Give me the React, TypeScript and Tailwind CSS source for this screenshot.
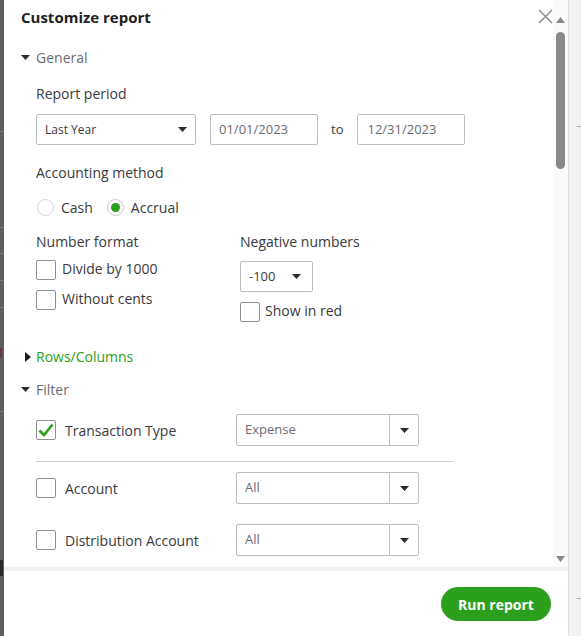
import React from "react";

const TEXT = "text-[#393a3d]";

function DownTri({ className = "" }: { className?: string }) {
  return (
    <svg width="9" height="5" viewBox="0 0 9 5" className={className}>
      <path d="M0 0 L9 0 L4.5 5 Z" fill="#2b2c2f" />
    </svg>
  );
}

function RightTri() {
  return (
    <svg width="6" height="10" viewBox="0 0 6 10">
      <path d="M0 0 L6 5 L0 10 Z" fill="#1a1a1a" />
    </svg>
  );
}

function Checkbox({ checked = false }: { checked?: boolean }) {
  return (
    <div className="w-[20px] h-[20px] border border-[#8d9096] rounded-[2px] bg-white flex items-center justify-center shrink-0">
      {checked && (
        <svg width="16" height="14" viewBox="0 0 16 14">
          <path d="M1.5 7.5 L6 12 L14.5 1.5" fill="none" stroke="#2ca01c" strokeWidth="2.6" />
        </svg>
      )}
    </div>
  );
}

function FilterSelect({ value }: { value: string }) {
  return (
    <div className="ml-auto w-[183px] h-[32px] border border-[#babec5] rounded-[2px] flex items-stretch">
      <div className="flex-1 flex items-center pl-[8px] text-[13px] text-[#6b6c72]">{value}</div>
      <div className="w-[29px] border-l border-[#babec5] flex items-center justify-center">
        <DownTri />
      </div>
    </div>
  );
}

function FilterRow({ label, value, checked }: { label: string; value: string; checked?: boolean }) {
  return (
    <div className="flex items-center w-[383px]">
      <Checkbox checked={checked} />
      <div className={`ml-[9px] text-[14px] ${TEXT}`}>{label}</div>
      <FilterSelect value={value} />
    </div>
  );
}

export default function App() {
  return (
    <div
      className="w-[581px] h-[636px] flex overflow-hidden bg-white"
      style={{ fontFamily: '"Open Sans", "Noto Sans", sans-serif' }}
    >
      {/* left background strip */}
      <div className="w-[4px] h-full bg-[#5e5e5e] flex flex-col shrink-0">
        <div className="h-[131px]" />
        <div className="h-px bg-[#7a7a7a]" />
        <div className="h-[95px]" />
        <div className="h-px bg-[#7a7a7a]" />
        <div className="h-[25px]" />
        <div className="h-px bg-[#7a7a7a]" />
        <div className="h-[26px]" />
        <div className="h-px bg-[#7a7a7a]" />
        <div className="h-[26px]" />
        <div className="h-px bg-[#7a7a7a]" />
        <div className="h-[40px]" />
        <div className="h-[10px] bg-[#6a3a3a] w-[2px]" />
        <div className="h-[53px]" />
        <div className="h-px bg-[#7a7a7a]" />
        <div className="flex-1" />
        <div className="h-[16px] bg-[#2a2a2a] w-[3px]" />
        <div className="h-[60px]" />
      </div>

      {/* panel */}
      <div className="w-[564px] h-full flex flex-col relative shrink-0 bg-white">
        <div className="h-[567px] flex overflow-hidden">
          <div className="flex-1 pl-[17px] flex flex-col">
            <div className="mt-[7px] h-[20px] leading-[20px] text-[15px] font-bold text-[#1f2024]">
              Customize report
            </div>

            {/* General */}
            <div className="mt-[20px] h-[20px] flex items-center">
              <DownTri />
              <span className="ml-[6px] text-[14px] text-[#6b6c72]">General</span>
            </div>

            <div className="pl-[15px] flex flex-col">
              <div className={`mt-[17px] h-[20px] leading-[20px] text-[14px] ${TEXT}`}>Report period</div>
              <div className="mt-[10px] flex items-center h-[31px]">
                <div className="w-[160px] h-[31px] border border-[#babec5] rounded-[2px] flex items-center justify-between pl-[8px] pr-[8px]">
                  <span className={`text-[12px] ${TEXT}`}>Last Year</span>
                  <DownTri />
                </div>
                <div className="ml-[14px] w-[108px] h-[31px] border border-[#babec5] rounded-[2px] flex items-center pl-[8px] text-[13px] text-[#6b6c72]">
                  01/01/2023
                </div>
                <span className={`ml-[13px] text-[13px] ${TEXT}`}>to</span>
                <div className="ml-[14px] w-[108px] h-[31px] border border-[#babec5] rounded-[2px] flex items-center pl-[9px] text-[13px] text-[#6b6c72]">
                  12/31/2023
                </div>
              </div>

              <div className={`mt-[18px] h-[20px] leading-[20px] text-[14px] ${TEXT}`}>Accounting method</div>
              <div className="mt-[14px] h-[20px] flex items-center">
                <div className="ml-[1px] mt-[1px] w-[17px] h-[17px] rounded-full border border-[#d4d7dc] bg-white" />
                <span className={`ml-[7px] text-[14px] ${TEXT}`}>Cash</span>
                <div className="ml-[14px] mt-[1px] w-[17px] h-[17px] rounded-full border border-[#c6c9ce] bg-white flex items-center justify-center">
                  <div className="w-[9px] h-[9px] rounded-full bg-[#2ca01c]" />
                </div>
                <span className={`ml-[7px] text-[14px] ${TEXT}`}>Accrual</span>
              </div>

              <div className="mt-[15px] flex">
                <div className="w-[204px] flex flex-col">
                  <div className={`h-[20px] leading-[20px] text-[14px] ${TEXT}`}>Number format</div>
                  <div className="mt-[8px] flex items-center h-[20px]">
                    <Checkbox />
                    <span className={`ml-[6px] text-[14px] ${TEXT} -mt-[3px]`}>Divide by 1000</span>
                  </div>
                  <div className="mt-[10px] flex items-center h-[20px]">
                    <Checkbox />
                    <span className={`ml-[6px] text-[14px] ${TEXT} -mt-[3px]`}>Without cents</span>
                  </div>
                </div>
                <div className="flex flex-col">
                  <div className={`h-[20px] leading-[20px] text-[14px] ${TEXT}`}>Negative numbers</div>
                  <div className="mt-[9px] w-[73px] h-[31px] border border-[#babec5] rounded-[2px] flex items-center justify-between pl-[8px] pr-[11px]">
                    <span className={`text-[13px] ${TEXT}`}>-100</span>
                    <DownTri />
                  </div>
                  <div className="mt-[10px] flex items-center h-[20px]">
                    <Checkbox />
                    <span className={`ml-[5px] text-[14px] ${TEXT} -mt-[3px]`}>Show in red</span>
                  </div>
                </div>
              </div>
            </div>

            {/* Rows/Columns */}
            <div className="mt-[24px] h-[20px] flex items-center">
              <div className="ml-[4px] mt-[1px]">
                <RightTri />
              </div>
              <span className="ml-[5px] text-[14px] text-[#2ca01c]">Rows/Columns</span>
            </div>

            {/* Filter */}
            <div className="mt-[13px] h-[20px] flex items-center">
              <DownTri className="mt-[1px]" />
              <span className="ml-[6px] text-[14px] text-[#6b6c72]">Filter</span>
            </div>

            <div className="pl-[15px] flex flex-col">
              <div className="mt-[15px]">
                <FilterRow label="Transaction Type" value="Expense" checked />
              </div>
              <div className="mt-[15px] w-[417px] h-px bg-[#c9cbd0]" />
              <div className="mt-[10px]">
                <FilterRow label="Account" value="All" />
              </div>
              <div className="mt-[20px]">
                <FilterRow label="Distribution Account" value="All" />
              </div>
            </div>
          </div>

          {/* scrollbar */}
          <div className="w-[15px] h-full bg-[#fafafa] flex flex-col items-center">
            <div className="mt-[17px] h-[6px] flex items-end">
              <svg width="9" height="6" viewBox="0 0 9 6">
                <path d="M0 6 L9 6 L4.5 0 Z" fill="#888" />
              </svg>
            </div>
            <div className="mt-[9px] w-[9px] h-[137px] rounded-full bg-[#8a8a8a]" />
            <div className="flex-1" />
            <div className="mb-[5px]">
              <svg width="9" height="6" viewBox="0 0 9 6">
                <path d="M0 0 L9 0 L4.5 6 Z" fill="#888" />
              </svg>
            </div>
          </div>
        </div>

        {/* close X (overlays the content) */}
        <div className="absolute left-[534px] top-[9px]">
          <svg width="15" height="15" viewBox="0 0 15 15">
            <path d="M1 1 L14 14 M14 1 L1 14" stroke="#8d9096" strokeWidth="1.6" />
          </svg>
        </div>

        <div className="h-[4px] bg-[#f1f2f5]" />
        <div className="flex-1 flex justify-end items-start pr-[17px] pt-[16px]">
          <button className="w-[110px] h-[34px] rounded-full bg-[#2ca01c] text-white text-[14px] font-bold">
            Run report
          </button>
        </div>
      </div>

      {/* right background strip */}
      <div className="flex-1 h-full bg-[#f3f3f4] border-l border-[#dcdcde] flex flex-col">
        <div className="h-[126px]" />
        <div className="ml-[8px] h-px bg-[#a8a8a8]" />
        <div className="h-[471px]" />
        <div className="ml-[8px] h-px bg-[#a8a8a8]" />
      </div>
    </div>
  );
}
